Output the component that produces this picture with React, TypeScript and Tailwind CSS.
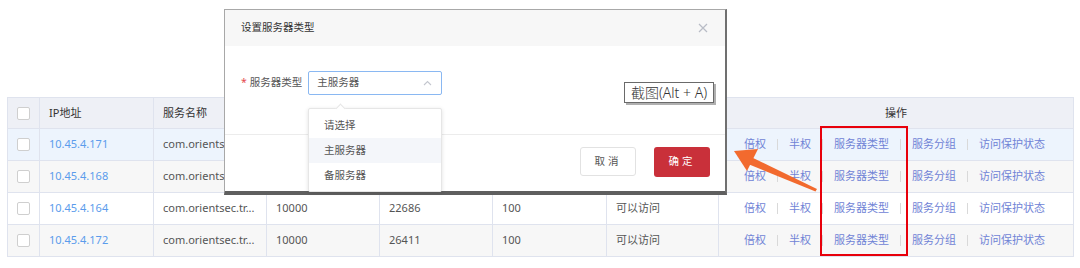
import React from 'react';

const FONT = { fontFamily: '"Noto Sans", "Noto Sans CJK SC", sans-serif' };

const rows = [
  { ip: '10.45.4.171', name: 'com.orientsec.tr...', port: '10000', pid: '22686', weight: '100', status: '可以访问', bg: 'bg-[#edf4fd]' },
  { ip: '10.45.4.168', name: 'com.orientsec.tr...', port: '10000', pid: '22686', weight: '100', status: '可以访问', bg: 'bg-[#f7f7f7]' },
  { ip: '10.45.4.164', name: 'com.orientsec.tr...', port: '10000', pid: '22686', weight: '100', status: '可以访问', bg: 'bg-white' },
  { ip: '10.45.4.172', name: 'com.orientsec.tr...', port: '10000', pid: '26411', weight: '100', status: '可以访问', bg: 'bg-[#f7f7f7]' },
];

const actions = ['倍权', '半权', '服务器类型', '服务分组', '访问保护状态'];

function Checkbox() {
  return <span className="block w-[13px] h-[13px] rounded-[2px] border border-[#cfcfcf] bg-white mx-auto" />;
}

function Actions() {
  return (
    <div className="flex items-center justify-center pr-[3px]">
      {actions.map((a, i) => (
        <React.Fragment key={a}>
          {i > 0 && <span className="mx-[11px] w-px h-[11px] bg-[#d9d9d9]" />}
          <span className="text-[#7083d6]">{a}</span>
        </React.Fragment>
      ))}
    </div>
  );
}

export default function App() {
  const td = 'border border-[#dfe3ee] px-[9px] whitespace-nowrap overflow-hidden';
  return (
    <div className="relative w-[1080px] h-[268px] bg-white overflow-hidden text-[11px] text-[#555]" style={FONT}>
      {/* Table */}
      <div className="pt-[97px] pl-[7px]">
        <table className="border-collapse table-fixed w-[1066px]">
          <colgroup>
            <col className="w-[32px]" />
            <col className="w-[114px]" />
            <col className="w-[113px]" />
            <col className="w-[113px]" />
            <col className="w-[113px]" />
            <col className="w-[114px]" />
            <col className="w-[112px]" />
            <col className="w-[355px]" />
          </colgroup>
          <thead>
            <tr className="h-[31px] bg-[#eef0f6] text-[#333]">
              <th className={td + ' px-0'}><Checkbox /></th>
              <th className={td + ' text-left font-normal'}>IP地址</th>
              <th className={td + ' text-left font-normal'}>服务名称</th>
              <th className={td + ' text-left font-normal'}>端口</th>
              <th className={td + ' text-left font-normal'}>进程号</th>
              <th className={td + ' text-left font-normal'}>权重</th>
              <th className={td + ' text-left font-normal'}>访问状态</th>
              <th className={td + ' text-center font-normal'}>操作</th>
            </tr>
          </thead>
          <tbody>
            {rows.map((r) => (
              <tr key={r.ip} className={'h-[32px] ' + r.bg}>
                <td className={td + ' px-0'}><Checkbox /></td>
                <td className={td + ' text-[#5b9cec]'}>{r.ip}</td>
                <td className={td}>{r.name}</td>
                <td className={td}>{r.port}</td>
                <td className={td}>{r.pid}</td>
                <td className={td}>{r.weight}</td>
                <td className={td}>{r.status}</td>
                <td className={td + ' px-0'}><Actions /></td>
              </tr>
            ))}
          </tbody>
        </table>
      </div>

      {/* Red highlight box */}
      <div className="absolute left-[820px] top-[126px] w-[88px] h-[130px] border-2 border-[#e8000b]" />

      {/* Modal dialog */}
      <div className="absolute left-[224px] top-[9px] w-[503px] h-[186px] bg-white border-l border-t border-[#a8a8a8] border-r-2 border-b-4 border-r-[#707070] border-b-[#5f5f5f] flex flex-col text-[10.5px]">
        <div className="h-[36px] bg-[#f7f7f7] flex items-center justify-between pl-[16px] pr-[16px] text-[#333]">
          <span>设置服务器类型</span>
          <svg width="10" height="10" viewBox="0 0 10 10" className="mr-[1px]">
            <path d="M1 1L9 9M9 1L1 9" stroke="#b8bcc6" strokeWidth="1.2" />
          </svg>
        </div>
        <div className="h-[89px] border-b border-[#ececec] pl-[16px] pt-[25px]">
          <div className="flex items-center">
            <span className="text-[#e5484d] mr-[3px]">*</span>
            <span className="text-[#555] mr-[6px]">服务器类型</span>
            <div className="w-[134px] h-[24px] border border-[#8ab8f2] rounded-[2px] flex items-center justify-between pl-[8px] pr-[9px]">
              <span className="text-[#555]">主服务器</span>
              <svg width="9" height="6" viewBox="0 0 9 6">
                <path d="M1 5L4.5 1.5L8 5" stroke="#c4c7cf" strokeWidth="1.1" fill="none" />
              </svg>
            </div>
          </div>
        </div>
        <div className="flex-1 flex items-start justify-end pt-[12px] pr-[15px] gap-[18px]">
          <button className="w-[56px] h-[29px] border border-[#e2e2e2] rounded-[3px] bg-white text-[#555] tracking-[3px]">取消</button>
          <button className="w-[56px] h-[30px] rounded-[3px] bg-[#c9303a] text-white tracking-[3px]">确定</button>
        </div>
      </div>

      {/* Dropdown menu */}
      <div className="absolute left-[308px] top-[108px] w-[134px] h-[84px] bg-white rounded-[2px] border border-[#e6e6e6] shadow-[0_1px_4px_rgba(0,0,0,0.12)] pt-[4px] text-[10.5px] text-[#555]">
        <span className="absolute -top-[4px] left-[28px] w-[7px] h-[7px] bg-white border-l border-t border-[#e6e6e6] rotate-45" />
        <div className="h-[25px] flex items-center pl-[15px]">请选择</div>
        <div className="h-[25px] flex items-center pl-[15px] bg-[#f4f6fa]">主服务器</div>
        <div className="h-[25px] flex items-center pl-[15px]">备服务器</div>
      </div>

      {/* Screenshot tooltip */}
      <div className="absolute left-[624px] top-[82px] w-[90px] h-[21px] bg-white border border-[#6a6a6a] shadow-[2px_2px_0_#b0b0b0] flex items-center justify-center text-[14px] text-[#333] font-light">
        截图(Alt + A)
      </div>

      {/* Orange annotation arrow */}
      <svg className="absolute left-0 top-0" width="1080" height="268" viewBox="0 0 1080 268">
        <polygon points="817,189 815.5,191.5 748,164 751,157" fill="#f26a2e" />
        <polygon points="734,151 758,149 747,171" fill="#f26a2e" />
      </svg>
    </div>
  );
}
